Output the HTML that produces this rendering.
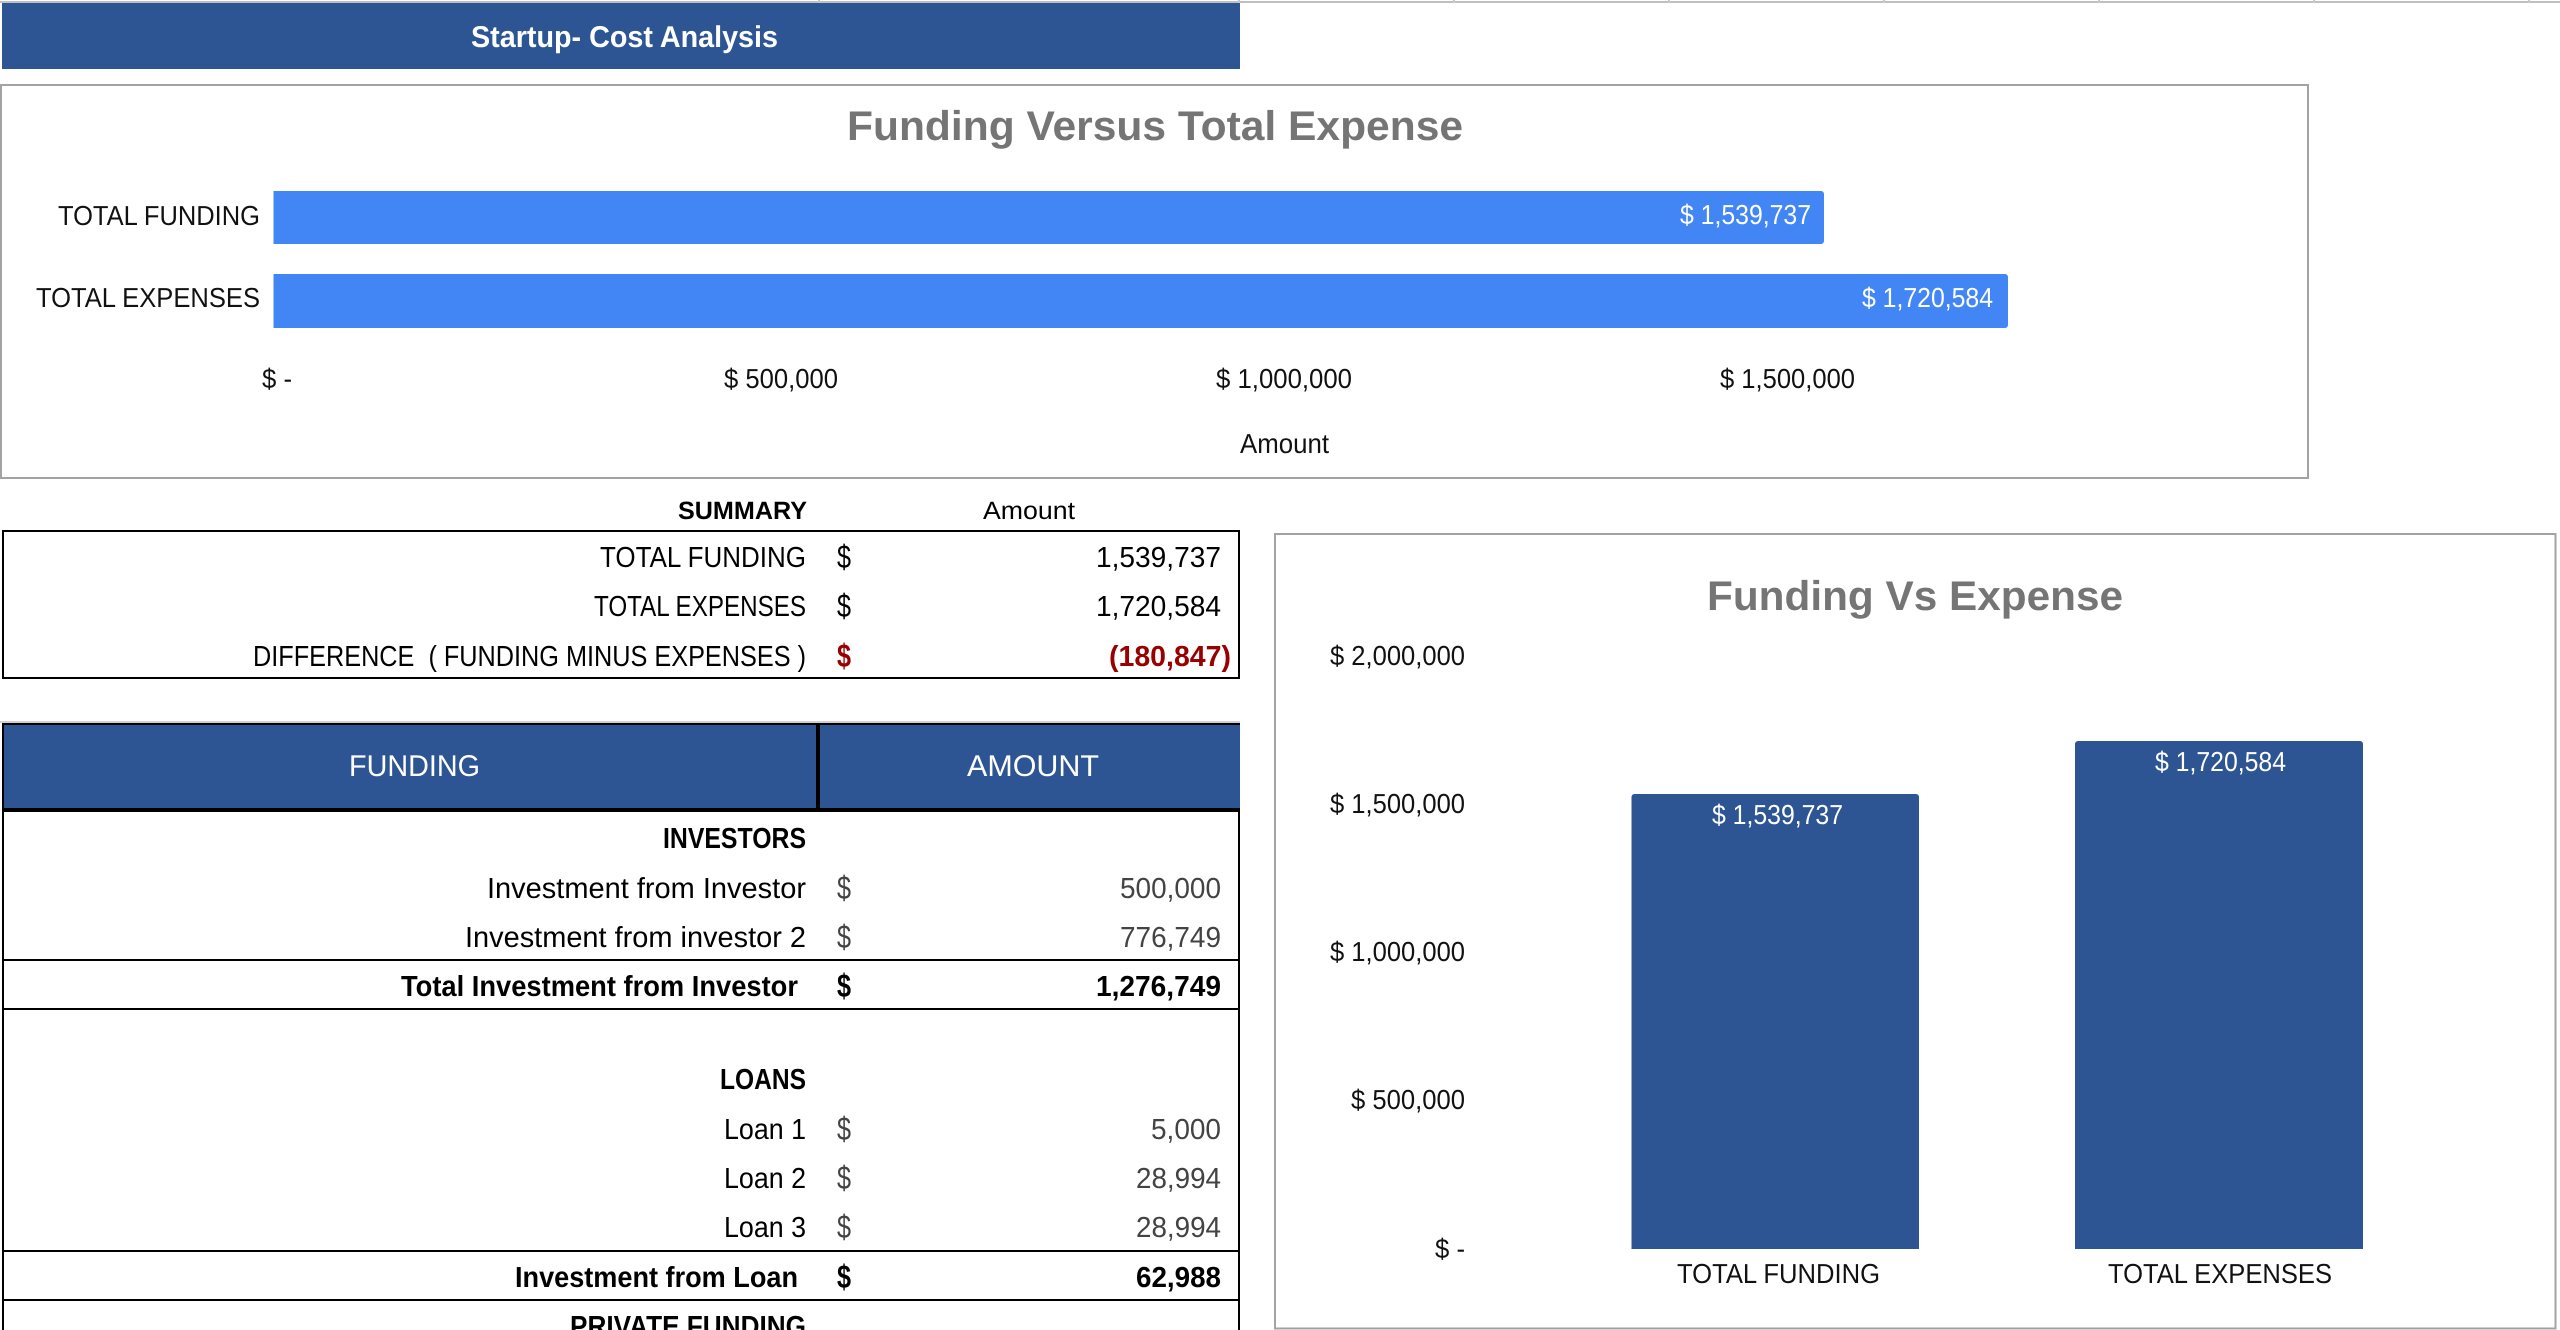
<!DOCTYPE html>
<html lang="en">
<head>
<meta charset="utf-8">
<title>Startup- Cost Analysis</title>
<style>
html,body{margin:0;padding:0;background:#fff;width:2560px;height:1330px;overflow:hidden}
svg{display:block}
text{font-family:"Liberation Sans",Arial,sans-serif;white-space:pre}
.t{font-size:29px;fill:#000}
.g{font-size:29px;fill:#434343}
.b{font-size:29px;font-weight:700;fill:#000}
.d{font-size:33px}
.c{font-size:27.5px;fill:#111}
.w{font-size:27.5px;fill:#fff}
.h{font-size:30px;fill:#fff}
.ti{font-size:41.5px;font-weight:700;fill:#757575}
</style>
</head>
<body>
<svg width="2560" height="1330" viewBox="0 0 2560 1330" xmlns="http://www.w3.org/2000/svg" text-rendering="geometricPrecision">
<rect width="2560" height="1330" fill="#fff"/>
<!-- top gridline -->
<rect x="0" y="1" width="2560" height="2" fill="#c0c0c0"/>
<g fill="#c8c8c8">
<rect x="818" y="0" width="2" height="3"/><rect x="1238" y="0" width="2" height="3"/>
<rect x="1453" y="0" width="2" height="3"/><rect x="1668" y="0" width="2" height="3"/>
<rect x="1883" y="0" width="2" height="3"/><rect x="2098" y="0" width="2" height="3"/>
<rect x="2313" y="0" width="2" height="3"/><rect x="2528" y="0" width="2" height="3"/>
</g>
<!-- title banner -->
<rect x="2" y="3" width="1238" height="66" fill="#2d5593"/>
<text class="h" x="471" y="47" font-weight="700" textLength="307" lengthAdjust="spacingAndGlyphs">Startup- Cost Analysis</text>

<!-- chart 1 -->
<rect x="1" y="85" width="2307" height="393" fill="#fff" stroke="#a3a3a3" stroke-width="2"/>
<text class="ti" x="847" y="140" textLength="616" lengthAdjust="spacingAndGlyphs">Funding Versus Total Expense</text>
<path d="M273.5 191H1821a3 3 0 0 1 3 3V241a3 3 0 0 1-3 3H273.5Z" fill="#4285f4"/>
<path d="M273.5 274H2005a3 3 0 0 1 3 3V325a3 3 0 0 1-3 3H273.5Z" fill="#4285f4"/>
<text class="c" x="58" y="225" textLength="202" lengthAdjust="spacingAndGlyphs">TOTAL FUNDING</text>
<text class="c" x="36" y="307" textLength="224" lengthAdjust="spacingAndGlyphs">TOTAL EXPENSES</text>
<text class="w" x="1680" y="224" textLength="131" lengthAdjust="spacingAndGlyphs">$ 1,539,737</text>
<text class="w" x="1862" y="307" textLength="131" lengthAdjust="spacingAndGlyphs">$ 1,720,584</text>
<text class="c" x="262" y="388" textLength="30" lengthAdjust="spacingAndGlyphs">$ -</text>
<text class="c" x="724" y="388" textLength="114" lengthAdjust="spacingAndGlyphs">$ 500,000</text>
<text class="c" x="1216" y="388" textLength="136" lengthAdjust="spacingAndGlyphs">$ 1,000,000</text>
<text class="c" x="1720" y="388" textLength="135" lengthAdjust="spacingAndGlyphs">$ 1,500,000</text>
<text class="c" x="1240" y="453" textLength="89" lengthAdjust="spacingAndGlyphs">Amount</text>

<!-- summary -->
<text class="b" x="678" y="519" style="font-size:25px" textLength="129" lengthAdjust="spacingAndGlyphs">SUMMARY</text>
<text class="t" x="983" y="519" style="font-size:25px" textLength="92" lengthAdjust="spacingAndGlyphs">Amount</text>
<rect x="3" y="531" width="1236" height="147" fill="none" stroke="#000" stroke-width="2"/>
<text class="t" x="600" y="567" textLength="206" lengthAdjust="spacingAndGlyphs">TOTAL FUNDING</text>
<text class="t d" x="837" y="568" textLength="14" lengthAdjust="spacingAndGlyphs">$</text>
<text class="t" x="1096" y="567" textLength="125" lengthAdjust="spacingAndGlyphs">1,539,737</text>
<text class="t" x="594" y="616" textLength="212" lengthAdjust="spacingAndGlyphs">TOTAL EXPENSES</text>
<text class="t d" x="837" y="617" textLength="14" lengthAdjust="spacingAndGlyphs">$</text>
<text class="t" x="1096" y="616" textLength="125" lengthAdjust="spacingAndGlyphs">1,720,584</text>
<text class="t" x="253" y="666" textLength="553" lengthAdjust="spacingAndGlyphs">DIFFERENCE  ( FUNDING MINUS EXPENSES )</text>
<text class="b d" x="837" y="667" style="fill:#990000" textLength="14" lengthAdjust="spacingAndGlyphs">$</text>
<text class="b" x="1109" y="666" style="fill:#990000" textLength="122" lengthAdjust="spacingAndGlyphs">(180,847)</text>

<!-- funding table -->
<rect x="0" y="721" width="1240" height="2" fill="#d0d0d0"/>
<rect x="2" y="723" width="1238" height="85" fill="#2d5593"/>
<rect x="2" y="723" width="1238" height="2" fill="#000"/>
<rect x="2" y="808" width="1238" height="4" fill="#000"/>
<rect x="816" y="723" width="4" height="86" fill="#000"/>
<rect x="2" y="723" width="2" height="607" fill="#000"/>
<rect x="1238" y="812" width="2" height="518" fill="#000"/>
<text class="h" x="349" y="776" textLength="131" lengthAdjust="spacingAndGlyphs">FUNDING</text>
<text class="h" x="967" y="776" textLength="132" lengthAdjust="spacingAndGlyphs">AMOUNT</text>

<text class="b" x="663" y="848" textLength="143" lengthAdjust="spacingAndGlyphs">INVESTORS</text>
<text class="t" x="487" y="898" textLength="319" lengthAdjust="spacingAndGlyphs">Investment from Investor</text>
<text class="g d" x="837" y="899" textLength="14" lengthAdjust="spacingAndGlyphs">$</text>
<text class="g" x="1120" y="898" textLength="101" lengthAdjust="spacingAndGlyphs">500,000</text>
<text class="t" x="465" y="947" textLength="341" lengthAdjust="spacingAndGlyphs">Investment from investor 2</text>
<text class="g d" x="837" y="948" textLength="14" lengthAdjust="spacingAndGlyphs">$</text>
<text class="g" x="1120" y="947" textLength="101" lengthAdjust="spacingAndGlyphs">776,749</text>
<rect x="2" y="959" width="1238" height="2" fill="#000"/>
<text class="b" x="401" y="996" textLength="397" lengthAdjust="spacingAndGlyphs">Total Investment from Investor</text>
<text class="b d" x="837" y="997" textLength="14" lengthAdjust="spacingAndGlyphs">$</text>
<text class="b" x="1096" y="996" textLength="125" lengthAdjust="spacingAndGlyphs">1,276,749</text>
<rect x="2" y="1008" width="1238" height="2" fill="#000"/>

<text class="b" x="720" y="1089" textLength="86" lengthAdjust="spacingAndGlyphs">LOANS</text>
<text class="t" x="724" y="1139" textLength="82" lengthAdjust="spacingAndGlyphs">Loan 1</text>
<text class="g d" x="837" y="1140" textLength="14" lengthAdjust="spacingAndGlyphs">$</text>
<text class="g" x="1151" y="1139" textLength="70" lengthAdjust="spacingAndGlyphs">5,000</text>
<text class="t" x="724" y="1188" textLength="82" lengthAdjust="spacingAndGlyphs">Loan 2</text>
<text class="g d" x="837" y="1189" textLength="14" lengthAdjust="spacingAndGlyphs">$</text>
<text class="g" x="1136" y="1188" textLength="85" lengthAdjust="spacingAndGlyphs">28,994</text>
<text class="t" x="724" y="1237" textLength="82" lengthAdjust="spacingAndGlyphs">Loan 3</text>
<text class="g d" x="837" y="1238" textLength="14" lengthAdjust="spacingAndGlyphs">$</text>
<text class="g" x="1136" y="1237" textLength="85" lengthAdjust="spacingAndGlyphs">28,994</text>
<rect x="2" y="1250" width="1238" height="2" fill="#000"/>
<text class="b" x="515" y="1287" textLength="283" lengthAdjust="spacingAndGlyphs">Investment from Loan</text>
<text class="b d" x="837" y="1288" textLength="14" lengthAdjust="spacingAndGlyphs">$</text>
<text class="b" x="1136" y="1287" textLength="85" lengthAdjust="spacingAndGlyphs">62,988</text>
<rect x="2" y="1299" width="1238" height="2" fill="#000"/>
<text class="b" x="570" y="1336" textLength="236" lengthAdjust="spacingAndGlyphs">PRIVATE FUNDING</text>

<!-- chart 2 -->
<rect x="1275" y="534" width="1280.5" height="794.5" fill="#fff" stroke="#a3a3a3" stroke-width="2"/>
<text class="ti" x="1707" y="610" textLength="416" lengthAdjust="spacingAndGlyphs">Funding Vs Expense</text>
<text class="c" x="1330" y="665" textLength="135" lengthAdjust="spacingAndGlyphs">$ 2,000,000</text>
<text class="c" x="1330" y="813" textLength="135" lengthAdjust="spacingAndGlyphs">$ 1,500,000</text>
<text class="c" x="1330" y="961" textLength="135" lengthAdjust="spacingAndGlyphs">$ 1,000,000</text>
<text class="c" x="1351" y="1109" textLength="114" lengthAdjust="spacingAndGlyphs">$ 500,000</text>
<text class="c" x="1435" y="1258" textLength="30" lengthAdjust="spacingAndGlyphs">$ -</text>
<path d="M1631.5 1249V797a3 3 0 0 1 3-3H1916a3 3 0 0 1 3 3V1249Z" fill="#2d5593"/>
<path d="M2075 1249V744a3 3 0 0 1 3-3H2360a3 3 0 0 1 3 3V1249Z" fill="#2d5593"/>
<text class="w" x="1712" y="824" textLength="131" lengthAdjust="spacingAndGlyphs">$ 1,539,737</text>
<text class="w" x="2155" y="771" textLength="131" lengthAdjust="spacingAndGlyphs">$ 1,720,584</text>
<text class="c" x="1677" y="1283" textLength="203" lengthAdjust="spacingAndGlyphs">TOTAL FUNDING</text>
<text class="c" x="2108" y="1283" textLength="224" lengthAdjust="spacingAndGlyphs">TOTAL EXPENSES</text>
</svg>
</body>
</html>
